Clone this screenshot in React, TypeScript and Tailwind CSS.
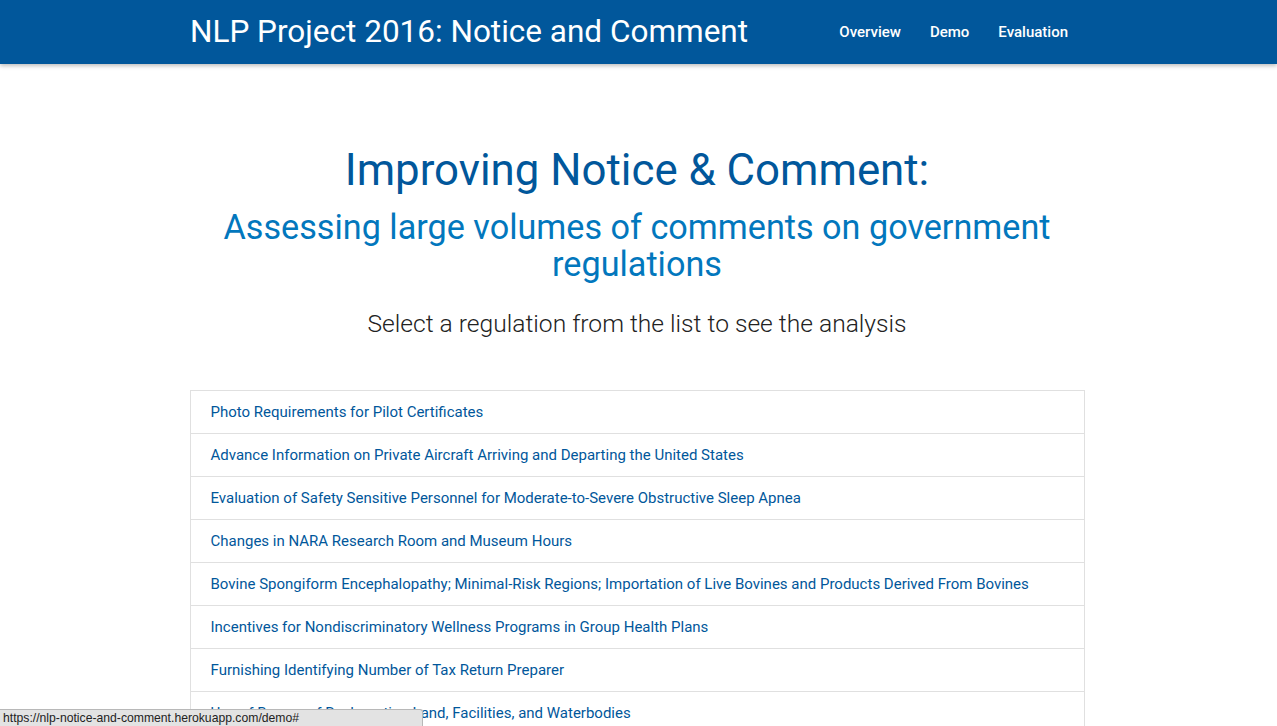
const regulations = [
    "Photo Requirements for Pilot Certificates",
    "Advance Information on Private Aircraft Arriving and Departing the United States",
    "Evaluation of Safety Sensitive Personnel for Moderate-to-Severe Obstructive Sleep Apnea",
    "Changes in NARA Research Room and Museum Hours",
    "Bovine Spongiform Encephalopathy; Minimal-Risk Regions; Importation of Live Bovines and Products Derived From Bovines",
    "Incentives for Nondiscriminatory Wellness Programs in Group Health Plans",
    "Furnishing Identifying Number of Tax Return Preparer",
    "Use of Bureau of Reclamation Land, Facilities, and Waterbodies",
    "Medicare Program; Hospital Outpatient Prospective Payment",
];

function App() {
    return (
        <div className="min-h-screen bg-white font-['Roboto',sans-serif] text-[#222]">
            <nav className="h-16 bg-[#01579b] shadow-[0_2px_4px_rgba(0,0,0,0.25)] pr-[3px]">
                <div className="w-[894px] mx-auto flex items-center justify-between h-full">
                    <a href="#" className="text-white text-[31.5px] leading-none">NLP Project 2016: Notice and Comment</a>
                    <ul className="flex items-center mr-[1px]">
                        <li><a href="#" className="block px-[15px] text-white text-[15px] font-medium">Overview</a></li>
                        <li><a href="#" className="block px-[14px] text-white text-[15px] font-medium">Demo</a></li>
                        <li><a href="#" className="block px-[15px] text-white text-[15px] font-medium">Evaluation</a></li>
                    </ul>
                </div>
            </nav>

            <div className="pr-[3px]">
                <div className="w-[894px] mx-auto text-center pt-[80px]">
                    <h1 className="text-[#01579b] text-[43.8px] leading-[52px]">Improving Notice &amp; Comment:</h1>
                    <h2 className="text-[#0277bd] text-[34.2px] leading-[37px] mt-[13px]">
                        Assessing large volumes of comments on government<br />regulations
                    </h2>
                    <h3 className="text-[24.6px] font-light leading-[30px] mt-[26px]">Select a regulation from the list to see the analysis</h3>
                </div>

                <ul className="w-[895px] mx-auto mt-[51px] border border-[#e0e0e0]">
                    {regulations.map((r, i) => (
                        <li key={i} className="border-b border-[#e0e0e0] last:border-b-0 h-[43px] px-5 flex items-center">
                            <a href="#" className="text-[#01579b] text-[15px]">{r}</a>
                        </li>
                    ))}
                </ul>
            </div>

            {/* browser link preview at the bottom */}
            <div className="fixed left-0 bottom-0 h-[17px] w-[423px] bg-[#e3e3e3] border-t border-r border-[#b8b8b8] rounded-tr-[3px] px-[3px] text-[12.2px] leading-[16px] text-[#222] font-['Liberation_Sans',sans-serif]">
                https://nlp-notice-and-comment.herokuapp.com/demo#
            </div>
        </div>
    );
}

export default App;
